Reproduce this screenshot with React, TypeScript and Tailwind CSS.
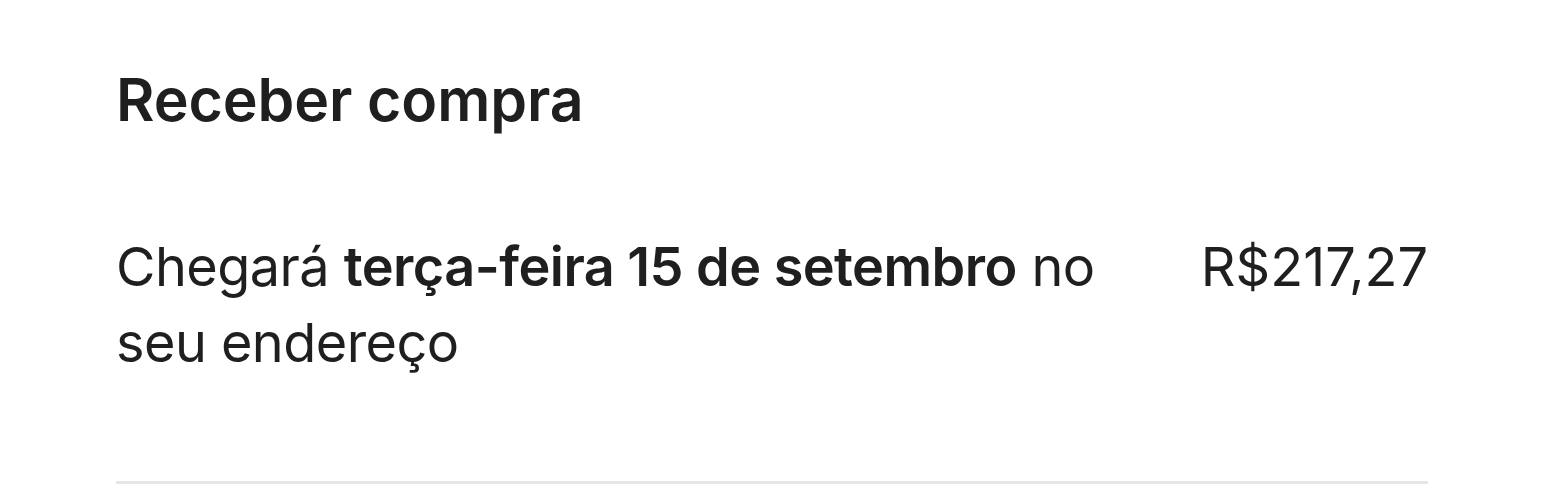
import React from "react";

export default function App() {
  return (
    <div
      className="w-[1543px] h-[500px] bg-white pl-[116px] pr-[115px] pt-[60px] text-[#1f1f1f]"
      style={{ fontFamily: "Inter, 'Noto Sans', sans-serif" }}
    >
      <h1 className="text-[59px] font-semibold leading-[80px] tracking-[-0.1px]">Receber compra</h1>
      <div className="mt-[89px] flex justify-between items-start">
        <p className="text-[54px] leading-[76px] w-[1000px] tracking-[-0.55px]">
          Chegará <span className="font-semibold">terça-feira 15 de setembro</span> no seu endereço
        </p>
        <div className="text-[54px] leading-[76px]">R$217,27</div>
      </div>
      <div className="mt-[100px] h-[3px] bg-[#e6e6e6]" />
    </div>
  );
}
